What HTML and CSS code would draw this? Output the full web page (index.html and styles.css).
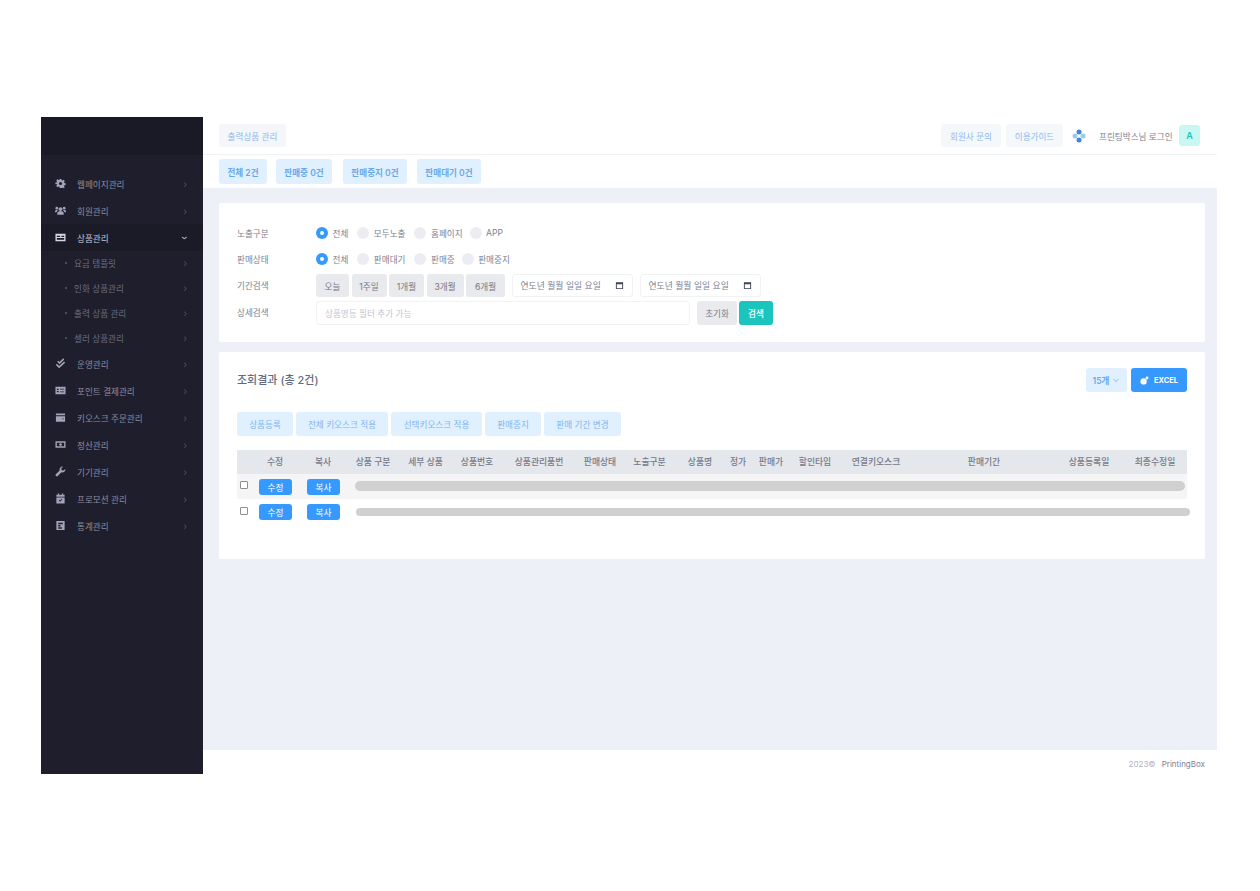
FILE: index.html
```html
<!DOCTYPE html>
<html lang="ko">
<head>
<meta charset="utf-8">
<title>출력상품 관리</title>
<link rel="stylesheet" href="styles.css">
</head>
<body>
<div class="app">
  <aside class="sidebar">
    <div class="brand"></div>
    <nav class="menu">
      <a class="item"><svg class="ico" viewBox="0 0 24 24"><path d="M10 1h4l.7 3.200 2 .8 2.800-1.800 2.800 2.800-1.800 2.800.8 2 3.200.7v4l-3.200.7-.8 2 1.800 2.800-2.800 2.800-2.800-1.800-2 .8L14 23h-4l-.7-3.200-2-.8-2.800 1.800-2.800-2.800 1.800-2.800-.8-2L-.5 14v-4l3.200-.7.8-2L1.700 4.500l2.800-2.800 2.800 1.800 2-.8z" transform="translate(1.200 1.200) scale(.9)"/><circle cx="12" cy="12" r="3.500" fill="#1e1e2d"/></svg><span class="lbl">웹페이지관리</span><span class="chev">›</span></a>
      <a class="item"><svg class="ico" viewBox="0 0 24 24"><circle cx="12" cy="9" r="4"/><circle cx="4" cy="7" r="3"/><circle cx="20" cy="7" r="3"/><path d="M5 21v-3c0-3 3-5 7-5s7 2 7 5v3zM0 16v-2c0-2 2-3 4-3 1 0 2 .3 2.500 1C4.500 13 3.500 14.500 3.300 16zM24 16v-2c0-2-2-3-4-3-1 0-2 .3-2.500 1 2 1 3 2.500 3.200 4z"/></svg><span class="lbl">회원관리</span><span class="chev">›</span></a>
      <a class="item active"><svg class="ico" viewBox="0 0 24 24"><path fill-rule="evenodd" d="M1 4h22v16H1zM4 8v3h7V8zM4 13v4h16v-4zM14 8v3h6V8z"/></svg><span class="lbl">상품관리</span><span class="chev down">›</span></a>
      <a class="sub"><i class="dot"></i><span class="lbl">요금 템플릿</span><span class="chev">›</span></a>
      <a class="sub"><i class="dot"></i><span class="lbl">인화 상품관리</span><span class="chev">›</span></a>
      <a class="sub"><i class="dot"></i><span class="lbl">출력 상품 관리</span><span class="chev">›</span></a>
      <a class="sub"><i class="dot"></i><span class="lbl">셀러 상품관리</span><span class="chev">›</span></a>
      <a class="item"><svg class="ico line" viewBox="0 0 24 24"><path d="M6 7l4 4 9-9M3 14l6 6L21 9"/></svg><span class="lbl">운영관리</span><span class="chev">›</span></a>
      <a class="item"><svg class="ico" viewBox="0 0 24 24"><path fill-rule="evenodd" d="M1 4h22v16H1zM4 8v3h4V8zM4 13v3h4v-3zM11 8v2h9V8zM11 14v2h9v-2z"/></svg><span class="lbl">포인트 결제관리</span><span class="chev">›</span></a>
      <a class="item"><svg class="ico" viewBox="0 0 24 24"><path fill-rule="evenodd" d="M2 3h20v4H2zM2 9h20v12H2zM16 14v2h3v-2z"/></svg><span class="lbl">키오스크 주문관리</span><span class="chev">›</span></a>
      <a class="item"><svg class="ico" viewBox="0 0 24 24"><path fill-rule="evenodd" d="M1 5h22v14H1zM4 8v8h16V8z"/><circle cx="12" cy="12" r="3"/></svg><span class="lbl">정산관리</span><span class="chev">›</span></a>
      <a class="item"><svg class="ico" viewBox="0 0 24 24"><path d="M22.500 6.500a6.500 6.500 0 0 1-8.600 7.100L6 22a3 3 0 0 1-4.200-4.200l8.400-7.900a6.500 6.500 0 0 1 7.300-8.500l-3.800 3.800.8 4 4 .8z"/></svg><span class="lbl">기기관리</span><span class="chev">›</span></a>
      <a class="item"><svg class="ico" viewBox="0 0 24 24"><path fill-rule="evenodd" d="M6 1h3v3h6V1h3v3h3v4H3V4h3zM3 10h18v13H3zM8 16l3 3 5-5-1.200-1.200L11 16.600l-1.800-1.800z"/></svg><span class="lbl">프로모션 관리</span><span class="chev">›</span></a>
      <a class="item"><svg class="ico" viewBox="0 0 24 24"><path fill-rule="evenodd" d="M3 2h18v20H3zM7 6v3h10V6zM7 11v3h5v-3zM7 16v3h8v-3z"/></svg><span class="lbl">통계관리</span><span class="chev">›</span></a>
    </nav>
  </aside>
  <div class="main">
    <header class="topbar">
      <span class="crumb">출력상품 관리</span>
      <div class="top-right">
        <a class="top-btn">회원사 문의</a>
        <a class="top-btn guide">이용가이드</a>
        <svg class="logo" viewBox="0 0 14 14"><circle class="lg-a" cx="7" cy="3" r="2.500"/><circle class="lg-b" cx="3" cy="7" r="2.500"/><circle class="lg-b" cx="11" cy="7" r="2.500"/><circle class="lg-a" cx="7" cy="11" r="2.500"/></svg>
        <span class="user">프린팅박스님 로그인</span>
        <span class="avatar">A</span>
      </div>
    </header>
    <div class="tabs">
      <a class="tab t1">전체 2건</a>
      <a class="tab t2">판매중 0건</a>
      <a class="tab t3">판매중지 0건</a>
      <a class="tab t4">판매대기 0건</a>
    </div>
    <main class="content">
      <section class="card filter">
        <div class="row">
          <span class="row-label">노출구분</span>
          <div class="radios">
            <label class="radio"><i class="mark on"></i>전체</label>
            <label class="radio"><i class="mark"></i>모두노출</label>
            <label class="radio"><i class="mark"></i>홈페이지</label>
            <label class="radio"><i class="mark"></i>APP</label>
          </div>
        </div>
        <div class="row">
          <span class="row-label">판매상태</span>
          <div class="radios">
            <label class="radio"><i class="mark on"></i>전체</label>
            <label class="radio"><i class="mark"></i>판매대기</label>
            <label class="radio"><i class="mark"></i>판매중</label>
            <label class="radio"><i class="mark"></i>판매중지</label>
          </div>
        </div>
        <div class="row tall">
          <span class="row-label">기간검색</span>
          <div class="periods">
            <a class="gray w33">오늘</a>
            <a class="gray w35">1주일</a>
            <a class="gray w35">1개월</a>
            <a class="gray w37">3개월</a>
            <a class="gray w38">6개월</a>
          </div>
          <div class="date">연도년 월월 일일 요일<svg class="cal" viewBox="0 0 10 10"><path fill-rule="evenodd" d="M1 1.500h8V9H1zM2 3.500V8h6V3.500z"/></svg></div>
          <div class="date">연도년 월월 일일 요일<svg class="cal" viewBox="0 0 10 10"><path fill-rule="evenodd" d="M1 1.500h8V9H1zM2 3.500V8h6V3.500z"/></svg></div>
        </div>
        <div class="row tall">
          <span class="row-label">상세검색</span>
          <div class="search">상품명등 필터 추가 가능</div>
          <a class="gray reset">초기화</a>
          <a class="go">검색</a>
        </div>
      </section>
      <section class="card result">
        <div class="result-head">
          <h2 class="title">조회결과 (총 2건)</h2>
          <div class="result-tools">
            <a class="count">15개<svg class="caret" viewBox="0 0 8 8"><path d="M1.500 3 4 5.500 6.500 3"/></svg></a>
            <a class="excel"><svg class="xl" viewBox="0 0 10 10"><circle cx="4" cy="6" r="3.500"/><circle cx="7.800" cy="2.200" r="1.600"/></svg>EXCEL</a>
          </div>
        </div>
        <div class="actions">
          <a class="act a1">상품등록</a>
          <a class="act a2">전체 키오스크 적용</a>
          <a class="act a3">선택키오스크 적용</a>
          <a class="act a4">판매중지</a>
          <a class="act a5">판매 기간 변경</a>
        </div>
        <div class="table">
          <div class="grid head">
            <span></span><span>수정</span><span>복사</span><span>상품 구분</span><span>세부 상품</span><span>상품번호</span><span>상품관리품번</span><span>판매상태</span><span>노출구분</span><span>상품명</span><span>정가</span><span>판매가</span><span>할인타입</span><span>연결키오스크</span><span>판매기간</span><span>상품등록일</span><span>최종수정일</span>
          </div>
          <div class="grid body odd">
            <i class="check"></i><a class="blue">수정</a><a class="blue">복사</a><i class="redact"></i>
          </div>
          <div class="grid body even">
            <i class="check"></i><a class="blue">수정</a><a class="blue">복사</a><i class="redact wide"></i>
          </div>
        </div>
      </section>
    </main>
    <footer class="footer"><span class="year">2023©</span><span class="owner">PrintingBox</span></footer>
  </div>
</div>
</body>
</html>
```
FILE: styles.css
```css
* { box-sizing: border-box; }
html, body { margin: 0; height: 100%; }
body {
  background: #fff;
  padding: 117px 43px 0 41px;
  font-family: Inter, "Noto Sans CJK KR", "Noto Sans", sans-serif;
  font-size: 8.600px;
  color: #7e8299;
  overflow: hidden;
}
a { display: block; }
i { display: block; font-style: normal; }

.app { display: flex; height: 657px; }

/* Sidebar */
.sidebar { width: 162px; flex: none; background: #1e1e2d; }
.brand { height: 38px; background: #1a1a27; }
.menu { padding-top: 15px; display: flex; flex-direction: column; }
.item {
  height: 27px; display: flex; align-items: center;
  padding: 0 16px 0 14px; color: #8d8d9e;
}
.item.active { background: #1b1b28; color: #c6c6d2; }
.ico { width: 11px; height: 11px; fill: #a2a3b7; flex: none; margin-right: 11px; }
.ico.line { fill: none; stroke: #a2a3b7; stroke-width: 3.500; }
.item.active .ico { fill: #d5d5df; }
.lbl { flex: 1; white-space: nowrap; }
.chev { color: #50505f; font-size: 10px; line-height: 10px; }
.chev.down { transform: rotate(90deg); color: #c6c6d2; }
.sub {
  height: 24.750px; display: flex; align-items: center;
  padding: 0 16px 0 24px; color: #6d6d80;
}
.dot { width: 2px; height: 2px; border-radius: 50%; background: #5a5a6c; margin-right: 7px; flex: none; }

/* Main */
.main { flex: 1; min-width: 0; display: flex; flex-direction: column; background: #eef0f8; }
.topbar {
  height: 38px; flex: none; background: #fff; border-bottom: 1px solid #eff2f5;
  display: flex; align-items: center; justify-content: space-between;
  padding: 0 17px 0 16px;
}
.crumb {
  height: 23px; width: 67px; border-radius: 3px; background: #f5f6fa;
  color: #8fb8ee; display: flex; align-items: center; justify-content: center;
}
.top-right { display: flex; align-items: center; }
.top-btn {
  height: 23px; width: 60px; border-radius: 3px; background: #f5f8fa;
  color: #8fb8ee; display: flex; align-items: center; justify-content: center;
}
.top-btn.guide { width: 57px; margin-left: 5px; }
.logo { width: 14px; height: 14px; margin: 0 13px 0 9px; }
.lg-a { fill: #3b87d9; }
.lg-b { fill: #9cc8f2; }
.user { color: #7c7f90; width: 73px; white-space: nowrap; }
.avatar {
  width: 21px; height: 21px; margin-left: 7px; border-radius: 3px;
  background: #c9f7f2; color: #1bc5bd; font-weight: 600; font-size: 9px;
  display: flex; align-items: center; justify-content: center;
}
.tabs {
  height: 33px; flex: none; background: #fff; padding: 4px 0 4px 16px;
  display: flex; gap: 10px;
}
.tab {
  height: 25px; border-radius: 3px; background: #e1f0ff;
  color: #6aa8ea; font-weight: 600; display: flex; align-items: center; justify-content: center;
}
.t1 { width: 48px; margin-right: -1px; }
.t2 { width: 56px; margin-right: 1px; }
.t3, .t4 { width: 64px; }

.content {
  flex: 1; padding: 15px 12px 0 16px; display: flex; flex-direction: column; gap: 10px;
  background: #eef0f8;
}
.card { background: #fff; border-radius: 2px; padding: 0 18px; }

/* Filter */
.filter { height: 139px; padding-top: 17px; }
.row { display: flex; align-items: center; height: 26px; }
.row.tall { height: 27px; }
.row-label { width: 79px; flex: none; color: #7c7f90; padding-bottom: 1px; }
.radios { display: flex; gap: 9px; }
.radio { display: flex; align-items: center; gap: 4.500px; color: #7c7f92; }
.radio:nth-child(3) { margin-right: -2px; }
.mark { width: 12px; height: 12px; border-radius: 50%; background: #ebedf3; flex: none; }
.mark.on { background: #3699ff; position: relative; }
.mark.on::after {
  content: ""; position: absolute; left: 4px; top: 4px;
  width: 4px; height: 4px; border-radius: 50%; background: #fff;
}
.periods { display: flex; gap: 2.500px; margin-right: 7px; }
.gray {
  height: 23px; border-radius: 3px; background: #e8eaee; color: #74788a;
  display: flex; align-items: center; justify-content: center;
}
.w33 { width: 33px; }
.w35 { width: 35px; }
.w37 { width: 37px; }
.w38 { width: 39px; }
.date {
  width: 121px; height: 23px; margin-right: 7px; border: 1px solid #f1f2f6; border-radius: 3px;
  display: flex; align-items: center; justify-content: space-between;
  padding: 0 8px 0 7.500px; color: #7c7f92; font-size: 8.800px; white-space: nowrap;
}
.cal { width: 9px; height: 9px; fill: #3f4254; flex: none; }
.search {
  width: 374px; height: 24px; border: 1px solid #f1f2f6; border-radius: 3px;
  display: flex; align-items: center; padding: 0 8px; color: #c3c6d2;
}
.reset { width: 40px; height: 24px; margin-left: 7px; }
.go {
  width: 34px; height: 24px; margin-left: 2px; border-radius: 3px;
  background: #1bc5bd; color: #fff; font-weight: 500;
  display: flex; align-items: center; justify-content: center;
}

/* Result */
.result { height: 207px; padding-top: 16px; }
.result-head { display: flex; align-items: center; justify-content: space-between; height: 24px; }
.title { margin: 0; padding-bottom: 2px; font-size: 11px; font-weight: 500; color: #666a80; }
.result-tools { display: flex; gap: 4px; }
.count {
  width: 41px; height: 24px; border-radius: 3px; background: #e1f0ff; color: #6aa8ea;
  font-weight: 600; display: flex; align-items: center; justify-content: center; gap: 3px;
}
.caret { width: 8px; height: 8px; fill: none; stroke: #8fb8ee; stroke-width: 1; }
.excel {
  width: 56px; height: 24px; border-radius: 3px; background: #3699ff; color: #fff;
  font-weight: 700; font-size: 7.500px;
  display: flex; align-items: center; justify-content: center; gap: 5px;
}
.xl { width: 9px; height: 9px; fill: #fff; }
.actions { display: flex; gap: 3px; margin-top: 20px; }
.act {
  height: 24px; border-radius: 3px; background: #e1f0ff; color: #7fb5ef;
  display: flex; align-items: center; justify-content: center;
}
.a1 { width: 56px; }
.a2 { width: 92px; }
.a3 { width: 91px; }
.a4 { width: 56px; }
.a5 { width: 77px; }

/* Table */
.table { margin-top: 14px; width: 950px; }
.grid {
  display: grid; align-items: center;
  grid-template-columns: 14px 48px 48px 52px 53px 50px 74px 48px 51px 50px 26px 40px 48px 74px 142px 68px 64px;
}
.head { height: 24px; padding-bottom: 2px; background: #e4e7ec; color: #767a8a; font-weight: 500; font-size: 8.800px; }
.head span { text-align: center; white-space: nowrap; }
.body { height: 25px; }
.odd { background: #f5f5f5; }
.even { height: 26px; background: #fff; }
.check {
  width: 8px; height: 8px; margin: -3px 0 0 3px; border: 1px solid #8f8f8f;
  border-radius: 1px; background: #fff;
}
.blue {
  width: 33px; height: 16px; justify-self: center; margin-left: 1px; border-radius: 3px;
  background: #3699ff; color: #fff; display: flex; align-items: center; justify-content: center;
}
.redact {
  grid-column: 4 / -1; height: 10px; margin: -1px 2px 0 8px; border-radius: 5px;
  background: #d0d0d0;
}
.redact.wide { height: 8px; margin: 0 -3px 0 9px; border-radius: 4px; }

/* Footer */
.footer {
  height: 24px; flex: none; background: #fff; padding: 3px 12px 0 0;
  display: flex; align-items: center; justify-content: flex-end; gap: 6px;
}
.year { color: #b5b5c3; font-size: 8px; }
.owner { color: #7e8299; font-size: 8px; }
```
